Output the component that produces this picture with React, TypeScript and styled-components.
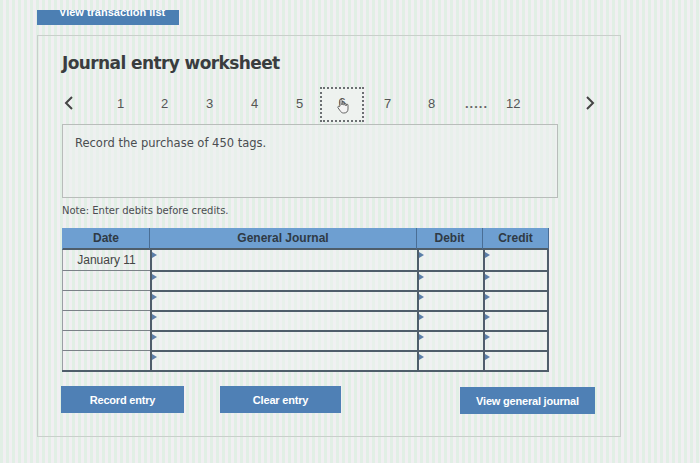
import React from "react";
import styled, { createGlobalStyle } from "styled-components";

const Global = createGlobalStyle`
  html, body { margin: 0; padding: 0; }
  body {
    width: 700px; height: 463px; overflow: hidden;
    font-family: Verdana, "DejaVu Sans", sans-serif;
    background-color: #e9efeb;
    background-image: repeating-linear-gradient(90deg, #e1efe5 0px, #e1efe5 3px, #f1eff2 3px, #f1eff2 6px);
  }
`;

const Page = styled.div`
  width: 700px; height: 463px; box-sizing: border-box;
  padding: 10px 0 0 37px;
  display: flex; flex-direction: column;
`;

const TopBar = styled.div`
  width: 142px; height: 15px; background: #4c7fb3;
  color: #fff; font: bold 11px "Liberation Sans", Arial, sans-serif;
  overflow: hidden; line-height: 4px; padding-left: 22px; box-sizing: border-box;
`;

const Panel = styled.div`
  margin-top: 10px; width: 584px; height: 402px; box-sizing: border-box;
  border: 1px solid #c9cfcb; padding: 16px 0 0 24px;
  display: flex; flex-direction: column;
`;

const Title = styled.h1`
  margin: 0; font: bold 17px "DejaVu Sans", Verdana, sans-serif; color: #3a3d3f;
  letter-spacing: -0.6px; line-height: 22px;
`;

const Nav = styled.div`
  margin-top: 13px; height: 36px; display: flex; align-items: center;
  position: relative; width: 540px;
`;

const Arrow = styled.span<{ $left: number }>`
  position: absolute; left: ${(p) => p.$left}px; top: 9px;
  color: #444; display: flex;
`;

const NumItem = styled.span<{ $left: number }>`
  position: absolute; left: ${(p) => p.$left}px; top: 9px;
  font: 13px "Liberation Sans", Arial, sans-serif; color: #555;
`;

const Dots = styled(NumItem)`
  font-weight: bold; letter-spacing: 1px; color: #666;
`;

const Current = styled.div<{ $left: number }>`
  position: absolute; left: ${(p) => p.$left}px; top: 0; width: 44px; height: 35px;
  box-sizing: border-box; border: 2px dotted #6b6f72; background: #eef2ef;
  display: flex; align-items: center; justify-content: center;
  font: 13px "Liberation Sans", Arial, sans-serif; color: #555;
`;

const Prompt = styled.div`
  margin-top: 1px;
  width: 496px; height: 74px; box-sizing: border-box; border: 1px solid #b8bdba;
  background: rgba(236, 240, 238, 0.6);
  padding: 11px 12px; font: 11.5px "DejaVu Sans", Verdana, sans-serif; color: #4a4d50;
`;

const Note = styled.div`
  margin-top: 7px; font: 10px "DejaVu Sans", Verdana, sans-serif; color: #4a4d50;
`;

const Table = styled.div`
  margin-top: 12px; width: 487px; display: grid;
  grid-template-columns: 88px 267px 66px 66px;
  border-bottom: 2px solid #4f5e6b;
`;

const Head = styled.div`
  height: 22px; background: #6e9fd1; border-right: 1px solid #4a6e95;
  border-bottom: 2px solid #4f5e6b;
  display: flex; align-items: center; justify-content: center;
  font: bold 12px "Liberation Sans", Arial, sans-serif; color: #2f3a45;
  box-sizing: border-box;
  &:first-child { border-left: 1px solid #6e9fd1; }
`;

const DateCell = styled.div`
  height: 20px; box-sizing: border-box; border-top: 1px solid #7b8288;
  border-left: 1px solid #9aa0a4;
  display: flex; align-items: center; justify-content: center;
  font: 12px "Liberation Sans", Arial, sans-serif; color: #444;
  &:nth-child(5) { border-top: none; }
`;

const InputCell = styled.div<{ $last?: boolean }>`
  height: 20px; box-sizing: border-box; position: relative;
  border-left: 2px solid #4f5e6b; border-top: 2px solid #4f5e6b;
  ${(p) => (p.$last ? "border-right: 2px solid #4f5e6b;" : "")}
  background: rgba(240, 244, 242, 0.5);
  &::before {
    content: ""; position: absolute; left: 0; top: 2px;
    border-left: 5px solid #5b7fa8; border-top: 3px solid transparent; border-bottom: 3px solid transparent;
  }
`;

const FirstInput = styled(InputCell)`
  border-top: none;
`;

const Buttons = styled.div`
  margin-top: 14px; display: flex; align-items: flex-start; width: 534px;
`;

const Btn = styled.button<{ $w: number; $ml: number; $mt?: number }>`
  width: ${(p) => p.$w}px; height: 27px; margin-left: ${(p) => p.$ml}px;
  margin-top: ${(p) => p.$mt ?? 0}px;
  background: #4f80b5; border: none; color: #fff; padding: 0;
  font: bold 11px "Liberation Sans", Arial, sans-serif; letter-spacing: -0.2px;
`;

const nums = [
  { n: "1", x: 55 }, { n: "2", x: 99 }, { n: "3", x: 144 }, { n: "4", x: 189 }, { n: "5", x: 234 },
  { n: "7", x: 322 }, { n: "8", x: 366 },
];

const Hand = () => (
  <svg width="14" height="16" viewBox="0 0 14 16" style={{ position: "absolute", left: 14, top: 9 }}>
    <path d="M4 8V2.2a1 1 0 0 1 2 0V7V5.6a1 1 0 0 1 2 0V7.2V6.3a1 1 0 0 1 2 0V8V7.2a1 1 0 0 1 2 0V11c0 2.5-1.5 4-4 4H7.5C5.8 15 5 14 4 12.6L2 9.8a1 1 0 0 1 1.6-1.2Z"
      fill="#f4f4f4" stroke="#555" strokeWidth="0.9" strokeLinejoin="round" />
  </svg>
);

export default function App() {
  const rows = [0, 1, 2, 3, 4, 5];
  return (
    <>
      <Global />
      <Page>
        <TopBar>View transaction list</TopBar>
        <Panel>
          <Title>Journal entry worksheet</Title>
          <Nav>
            <Arrow $left={2}>
              <svg width="10" height="14" viewBox="0 0 10 14"><path d="M8 1L2 7l6 6" fill="none" stroke="#444" strokeWidth="2" /></svg>
            </Arrow>
            {nums.slice(0, 5).map((it) => <NumItem key={it.n} $left={it.x}>{it.n}</NumItem>)}
            <Current $left={258}>
              <span style={{ marginTop: -4 }}>6</span>
              <Hand />
            </Current>
            {nums.slice(5).map((it) => <NumItem key={it.n} $left={it.x}>{it.n}</NumItem>)}
            <Dots $left={403}>.....</Dots>
            <NumItem $left={444}>12</NumItem>
            <Arrow $left={523}>
              <svg width="10" height="14" viewBox="0 0 10 14"><path d="M2 1l6 6-6 6" fill="none" stroke="#444" strokeWidth="2" /></svg>
            </Arrow>
          </Nav>
          <Prompt>Record the purchase of 450 tags.</Prompt>
          <Note>Note: Enter debits before credits.</Note>
          <Table>
            <Head>Date</Head>
            <Head>General Journal</Head>
            <Head>Debit</Head>
            <Head>Credit</Head>
            {rows.map((r) => (
              <React.Fragment key={r}>
                <DateCell>{r === 0 ? "January 11" : ""}</DateCell>
                {r === 0 ? <FirstInput /> : <InputCell />}
                {r === 0 ? <FirstInput /> : <InputCell />}
                {r === 0 ? <FirstInput $last /> : <InputCell $last />}
              </React.Fragment>
            ))}
          </Table>
          <Buttons>
            <Btn $w={123} $ml={-1}>Record entry</Btn>
            <Btn $w={121} $ml={36}>Clear entry</Btn>
            <Btn $w={135} $ml={119} $mt={1}>View general journal</Btn>
          </Buttons>
        </Panel>
      </Page>
    </>
  );
}
